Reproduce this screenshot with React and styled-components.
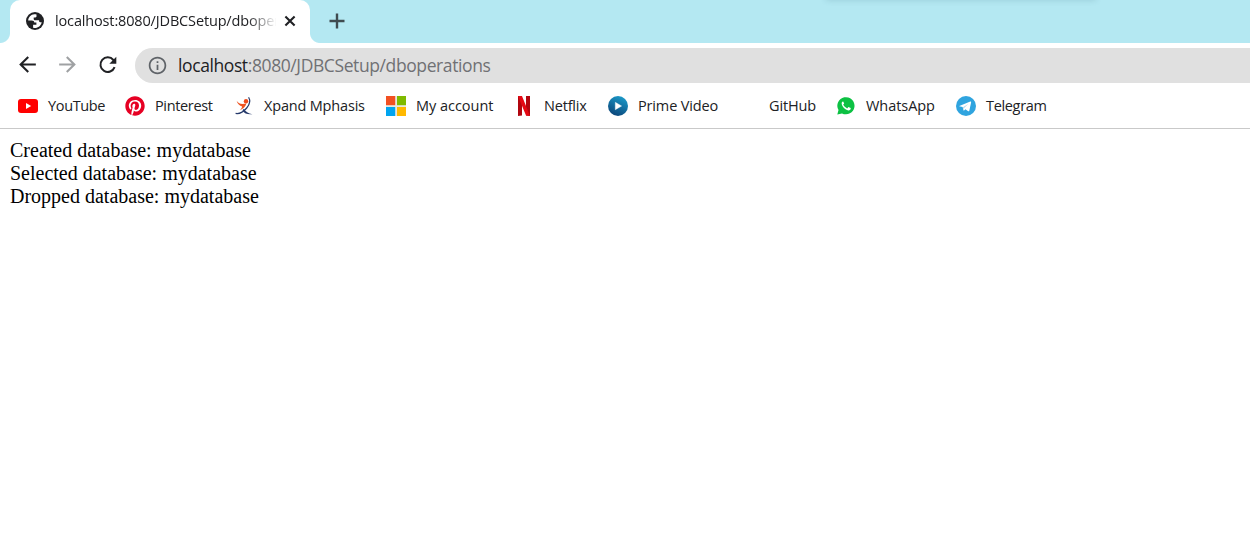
import React from "react";
import styled, { createGlobalStyle } from "styled-components";
import { MdArrowBack, MdArrowForward, MdInfoOutline } from "react-icons/md";
import { FaPinterest } from "react-icons/fa";

const Global = createGlobalStyle`
  * { box-sizing: border-box; }
  body { margin: 0; background: #fff; }
`;

const Browser = styled.div`
  height: 540px;
  overflow: hidden;
  background: #fff;
  font-family: "Open Sans", "Noto Sans", sans-serif;
  font-weight: 400;
  color: #202124;
`;

const TabStrip = styled.div`
  position: relative;
  display: flex;
  height: 43px;
  background: #b4e8f2;
  overflow: hidden;
`;

const WindowShadow = styled.div`
  position: absolute;
  top: -10px;
  left: 826px;
  width: 270px;
  height: 10px;
  box-shadow: 0 0 6px rgba(40, 90, 110, 0.2);
`;

const TabFoot = styled.div`
  width: 10px;
  background: radial-gradient(
    circle at ${(p) => (p.$side === "left" ? "0 0" : "100% 0")},
    #b4e8f2 9.5px,
    #fff 10.5px
  );
  height: 10px;
  align-self: flex-end;
`;

const Tab = styled.div`
  display: flex;
  align-items: center;
  width: 300px;
  height: 43px;
  padding: 0 14px 1px 16px;
  background: #fff;
  border-radius: 10px 10px 0 0;
`;

const TabTitle = styled.div`
  width: 221px;
  margin-left: 11px;
  margin-right: 8px;
  padding-bottom: 1px;
  overflow: hidden;
  white-space: nowrap;
  font-size: 14.5px;
  letter-spacing: ${(p) => p.$spacing}px;
  mask-image: linear-gradient(to right, #000 192px, transparent 222px);
`;

const NewTab = styled.div`
  display: flex;
  align-items: center;
  margin-left: 9px;
  padding-bottom: 1px;
`;

const Toolbar = styled.div`
  display: flex;
  align-items: center;
  height: 45px;
  padding-left: 15px;
`;

const NavButton = styled.div`
  display: flex;
  align-items: center;
  width: 40px;
  height: 24px;
  margin-bottom: 2px;
  color: ${(p) => (p.$muted ? "#9fa1a3" : "#202124")};
`;

const AddressBar = styled.div`
  display: flex;
  align-items: center;
  flex: 1;
  height: 35px;
  padding: 0 0 1px 12px;
  background: #e0e0e0;
  border-radius: 18px 0 0 18px;
  color: #5f6368;
`;

const Url = styled.div`
  margin-left: 10px;
  font-size: 17.5px;
  line-height: 24px;
  letter-spacing: ${(p) => p.$spacing}px;
  white-space: nowrap;
  color: #707174;
`;

const Host = styled.span`
  color: #202124;
`;

const Bookmarks = styled.div`
  display: flex;
  align-items: center;
  height: 41px;
  padding: 0 0 5px 18px;
  border-bottom: 1px solid #c9c9c9;
`;

const Bookmark = styled.div`
  display: flex;
  align-items: center;
  flex: none;
  gap: 10px;
  width: ${(p) => p.$width}px;
`;

const IconSlot = styled.div`
  display: flex;
  align-items: center;
  justify-content: center;
  width: 20px;
  height: 20px;
  flex: none;
`;

const Label = styled.span`
  font-size: 14.5px;
  line-height: 20px;
  letter-spacing: ${(p) => p.$spacing}px;
  white-space: nowrap;
`;

const Page = styled.main`
  padding: 10px;
  font-family: "Liberation Serif", "Times New Roman", serif;
  font-size: 20px;
  line-height: 23px;
  color: #000;
`;

const Globe = () => (
  <svg width="18" height="18" viewBox="0 0 18 18">
    <circle cx="9" cy="9" r="9" fill="#202124" />
    <path
      d="M8.2 2.2C5 2.4 2.3 5.2 2.2 8.5h3.6c1.7 0 2.5.8 2.5 2.1h2.1v2.2H7.1v2.9c3.8 1.1 7.9-1.4 8.6-5.5h-1.6c-.7 0-1-.4-1-1.1V8.3H9.4c-1.1 0-1.7-.6-1.7-1.6V5.4h1.6c.8 0 1.2-.5 1.2-1.2V2.4c-.7-.2-1.5-.3-2.3-.2z"
      fill="#fff"
    />
  </svg>
);

const Reload = () => (
  <svg width="25" height="24" viewBox="0 0 25 24">
    <path d="M19.6 14.2a7.3 7.3 0 1 1-1.2-7.2l1 1.2" fill="none" stroke="#202124" strokeWidth="2" />
    <path d="M21.3 3.7v7h-7z" fill="#202124" />
  </svg>
);

const YouTube = () => (
  <svg width="20" height="14" viewBox="0 0 20 14">
    <rect width="20" height="14" rx="3" fill="#f00" />
    <path d="M8 4v6l5.2-3z" fill="#fff" />
  </svg>
);

const Xpand = () => (
  <svg width="20" height="20" viewBox="0 0 20 20" fill="none">
    <path d="M14.6 1.3c2 3.2 1.1 7.2-1.9 10.7-3.2 3.8-7.6 6-11.1 5.4" stroke="#263a6b" strokeWidth="1.2" />
    <path d="M9.8 12.8c1.8 2.7 4.2 4.7 8.7 5.4-4.9.6-8-.6-10-3.7z" fill="#263a6b" />
    <path d="M2.6 4.8c1.7 2.3 3.4 3.2 5.9 3.2l3.9-.4c-1 3.1-3 5.2-6.6 6.7 1.5-1.5 2.1-2.6 2.3-3.9C5.6 9.7 3.6 8.1 2.6 4.8z" fill="#ee5320" />
    <circle cx="12" cy="5.2" r="2.2" fill="#f04b1b" />
  </svg>
);

const Microsoft = () => (
  <svg width="20" height="20" viewBox="0 0 20 20">
    <path fill="#e8e8e0" d="M0 0h20v20H0z" />
    <path fill="#f25022" d="M0 0h9.2v9.2H0z" />
    <path fill="#7fba00" d="M11 0h9v9.2h-9z" />
    <path fill="#00a4ef" d="M0 11h9.2v9H0z" />
    <path fill="#ffb900" d="M11 11h9v9h-9z" />
  </svg>
);

const Netflix = () => (
  <svg width="20" height="20" viewBox="0 0 20 20">
    <path fill="#b1060f" d="M4 0h4v19.4L4 20zM12 0h4v20l-4-.6z" />
    <path fill="#e50914" d="M4 0h4l8 20-4-.6z" />
  </svg>
);

const PrimeVideo = () => (
  <svg width="20" height="20" viewBox="0 0 20 20">
    <defs>
      <linearGradient id="prime" x1=".75" y1="0" x2=".3" y2="1">
        <stop offset="0" stopColor="#1c9ccb" />
        <stop offset="1" stopColor="#0b4478" />
      </linearGradient>
    </defs>
    <circle cx="10" cy="10" r="10" fill="url(#prime)" />
    <path d="M7.3 6.3v7.4l6.3-3.7z" fill="#fff" stroke="#fff" strokeWidth=".4" strokeLinejoin="round" />
  </svg>
);

const Pinterest = () => <FaPinterest size={20} color="#e60023" />;

const WhatsApp = () => (
  <svg width="20" height="20" viewBox="0 0 20 20">
    <path d="M1.3 18.6l1.2-4.5A8.6 8.6 0 1 1 6 17.4z" fill="#0cc143" />
    <path d="M7 5.5c-.9.3-1.5 1.2-1.3 2.3.5 3.1 3.4 6 6.6 6.6 1.2.1 2.2-.5 2.4-1.6v-.7l-2.3-1.1-1.2 1.4c-1.9-.8-3.2-2-4-3.8l1-1.2-1-2z" fill="#fff" />
  </svg>
);

const Telegram = () => (
  <svg width="20" height="20" viewBox="0 0 20 20">
    <circle cx="10" cy="10" r="10" fill="#2fa4df" />
    <path d="M3.3 9.9l11-4.3c.6-.2 1 .1.8.8l-1.8 8.3c-.1.7-.6.8-1.1.5l-2.8-2-1.3 1.4c-.3.2-.5.2-.6-.3l-.9-3.2-3.3-.9c-.3-.1-.3-.2 0-.3z" fill="#fff" />
    <path d="M7 11.2l5.5-3.5-4.4 4.2-.3 2.2z" fill="#b5d8ec" />
  </svg>
);

const bookmarks = [
  { label: "YouTube", icon: YouTube, width: 107, spacing: -0.35 },
  { label: "Pinterest", icon: Pinterest, width: 109, spacing: -0.35 },
  { label: "Xpand Mphasis", icon: Xpand, width: 152, spacing: -0.18 },
  { label: "My account", icon: Microsoft, width: 128, spacing: -0.03 },
  { label: "Netflix", icon: Netflix, width: 94, spacing: -0.2 },
  { label: "Prime Video", icon: PrimeVideo, width: 131, spacing: -0.15 },
  { label: "GitHub", icon: null, width: 97, spacing: -0.15 },
  { label: "WhatsApp", icon: WhatsApp, width: 120, spacing: -0.05 },
  { label: "Telegram", icon: Telegram, width: 100, spacing: -0.33 },
];

export default function App() {
  return (
    <Browser>
      <Global />
      <TabStrip>
        <TabFoot $side="left" />
        <Tab>
          <Globe />
          <TabTitle $spacing={-0.15}>localhost:8080/JDBCSetup/dboperations</TabTitle>
          <svg width="12" height="12" viewBox="0 0 12 12" stroke="#202124" strokeWidth="2.1">
            <path d="M1.4 1.4l9.2 9.2M10.6 1.4l-9.2 9.2" />
          </svg>
        </Tab>
        <TabFoot $side="right" />
        <NewTab>
          <svg width="16" height="16" viewBox="0 0 16 16" stroke="#3f4b50" strokeWidth="2.4">
            <path d="M8 .5v15M.5 8h15" />
          </svg>
        </NewTab>
        <WindowShadow />
      </TabStrip>
      <Toolbar>
        <NavButton><MdArrowBack size={25} /></NavButton>
        <NavButton $muted><MdArrowForward size={25} /></NavButton>
        <NavButton><Reload /></NavButton>
        <AddressBar>
          <MdInfoOutline size={21} />
          <Url $spacing={-0.4}><Host>localhost</Host>:8080/JDBCSetup/dboperations</Url>
        </AddressBar>
      </Toolbar>
      <Bookmarks>
        {bookmarks.map(({ label, icon: Icon, width, spacing }) => (
          <Bookmark key={label} $width={width}>
            <IconSlot>{Icon && <Icon />}</IconSlot>
            <Label $spacing={spacing}>{label}</Label>
          </Bookmark>
        ))}
      </Bookmarks>
      <Page>
        <div>Created database: mydatabase</div>
        <div>Selected database: mydatabase</div>
        <div>Dropped database: mydatabase</div>
      </Page>
    </Browser>
  );
}
